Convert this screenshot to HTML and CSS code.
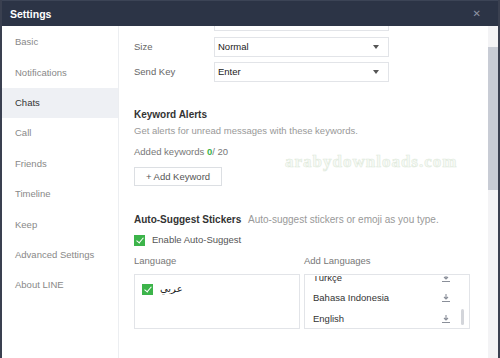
FILE: index.html
```html
<html>
<head>
<title>Settings</title>
<link rel="stylesheet" href="styles.css">
</head>
<body>
<div id="win">
    <div class="titleBar">
        <span class="title">Settings</span>
        <span class="close">&#x2715;</span>
    </div>
    <div class="main">
        <ul class="menu">
            <li>Basic</li>
            <li>Notifications</li>
            <li class="on">Chats</li>
            <li>Call</li>
            <li>Friends</li>
            <li>Timeline</li>
            <li>Keep</li>
            <li>Advanced Settings</li>
            <li>About LINE</li>
        </ul>
        <div class="panel">
            <div class="scrollBody">
                <div class="row">
                    <span class="lbl"></span>
                    <div class="sel"></div>
                </div>
                <div class="row">
                    <span class="lbl">Size</span>
                    <div class="sel">Normal<i class="caret"></i></div>
                </div>
                <div class="row">
                    <span class="lbl">Send Key</span>
                    <div class="sel">Enter<i class="caret"></i></div>
                </div>

                <div class="section kw">
                    <h2>Keyword Alerts</h2>
                    <p class="desc">Get alerts for unread messages with these keywords.</p>
                    <p class="count">Added keywords <b>0</b>/ 20</p>
                    <div class="btn">+ Add Keyword</div>
                </div>

                <div class="section sticker">
                    <h2>Auto-Suggest Stickers <span>Auto-suggest stickers or emoji as you type.</span></h2>
                    <div class="check"><i class="box"></i>Enable Auto-Suggest</div>
                    <div class="langs">
                        <div class="col">
                            <p class="colTit">Language</p>
                            <div class="list">
                                <div class="check ar"><i class="box"></i><span lang="ar">عربي</span></div>
                            </div>
                        </div>
                        <div class="col">
                            <p class="colTit">Add Languages</p>
                            <div class="list addList">
                                <div class="view">
                                    <div class="items">
                                        <div class="item">Türkçe<svg class="dl" viewBox="0 0 10 10"><path d="M5 1v5M3 4l2 2 2-2M1 8.5h8" fill="none" stroke="#8a8f99" stroke-width="1.1"/></svg></div>
                                        <div class="item">Bahasa Indonesia<svg class="dl" viewBox="0 0 10 10"><path d="M5 1v5M3 4l2 2 2-2M1 8.5h8" fill="none" stroke="#8a8f99" stroke-width="1.1"/></svg></div>
                                        <div class="item">English<svg class="dl" viewBox="0 0 10 10"><path d="M5 1v5M3 4l2 2 2-2M1 8.5h8" fill="none" stroke="#8a8f99" stroke-width="1.1"/></svg></div>
                                    </div>
                                </div>
                                <i class="miniBar"></i>
                            </div>
                        </div>
                    </div>
                </div>
            </div>
            <div class="wm">arabydownloads.com</div>
        </div>
        <div class="scrollBar"><i class="thumb"></i></div>
    </div>
</div>
</body>
</html>
```
FILE: styles.css
```css
body,ul,li,div,h2,p{margin:0;padding:0;}
body{width:500px;height:358px;overflow:hidden;background:#fff;font:9.5px/12px "Liberation Sans",Tahoma,"DejaVu Sans",sans-serif;color:#555;}
ul{list-style-type:none;}
#win{height:358px;display:flex;flex-direction:column;border-left:2px solid #3a4050;border-right:2px solid #3a4050;box-sizing:border-box;}
.titleBar{height:26px;flex:none;background:#2c3446;display:flex;align-items:center;justify-content:space-between;padding:0 17px 0 8px;border-top:1px solid #3c4456;box-sizing:border-box;}
.title{color:#fff;font-weight:bold;font-size:10.5px;}
.close{color:#8c93a3;font-size:10px;}
.main{flex:1;display:flex;min-height:0;}
.menu{width:116px;flex:none;border-right:1px solid #eceef1;padding-top:1px;}
.menu li{height:30.4px;display:flex;align-items:center;padding-left:13px;color:#888;font-size:9.5px;}
.menu li.on{background:#eef0f4;color:#333;}
.panel{flex:1;position:relative;overflow:hidden;}
.scrollBody{margin-top:-15px;padding-left:15px;}
.row{display:flex;align-items:center;height:20px;margin-bottom:5.5px;}
.lbl{width:80px;color:#666;}
.sel{width:175px;height:20px;box-sizing:border-box;border:1px solid #e2e4e8;display:flex;align-items:center;justify-content:space-between;padding:0 9px 0 3px;color:#222;}
.caret{width:0;height:0;border-left:3px solid transparent;border-right:3px solid transparent;border-top:4px solid #555;}
.section h2{font-size:10px;font-weight:bold;color:#333;}
.kw{padding-top:21.5px;}
.desc{color:#999;margin-top:4px;}
.count{color:#777;margin-top:9px;}
.count b{color:#3cb44a;font-weight:bold;}
.btn{width:88px;height:19px;box-sizing:border-box;border:1px solid #dcdfe3;display:flex;align-items:center;justify-content:center;color:#555;margin-top:9px;}
.sticker{padding-top:28px;}
.sticker h2 span{font-weight:normal;color:#999;margin-left:4px;}
.check{display:flex;align-items:center;color:#555;margin-top:8px;}
.box{width:11px;height:11px;background:#3cb44a;margin-right:7px;position:relative;flex:none;}
.box:after{content:"";position:absolute;left:3.5px;top:1px;width:3px;height:6px;border:solid #fff;border-width:0 1.6px 1.6px 0;transform:rotate(40deg);}
.langs{display:flex;gap:4px;margin-top:9px;}
.col{width:166px;}
.colTit{color:#777;height:12px;}
.list{height:55px;box-sizing:border-box;border:1px solid #e2e4e8;margin-top:7px;position:relative;overflow:hidden;}
.check.ar{margin:8px 0 0 7px;color:#222;font-family:"DejaVu Sans",sans-serif;font-size:10px;}
.view{margin-top:1px;height:51px;overflow:hidden;}
.items{margin-top:-8.5px;padding-left:8px;}
.item{height:20.5px;display:flex;align-items:center;justify-content:space-between;padding-right:18px;color:#333;}
.dl{width:10px;height:10px;}
.miniBar{position:absolute;right:5px;bottom:3px;width:3px;height:16px;background:#d3d5da;border-radius:2px;}
.wm{position:absolute;left:166px;top:126px;font:bold 17px "Liberation Serif",serif;letter-spacing:1px;color:#f7faf6;-webkit-text-stroke:0.6px #e0eadc;}
.scrollBar{width:10px;flex:none;background:#f3f3f5;padding-top:21px;}
.thumb{display:block;height:143px;background:#c8ccd5;}
```
